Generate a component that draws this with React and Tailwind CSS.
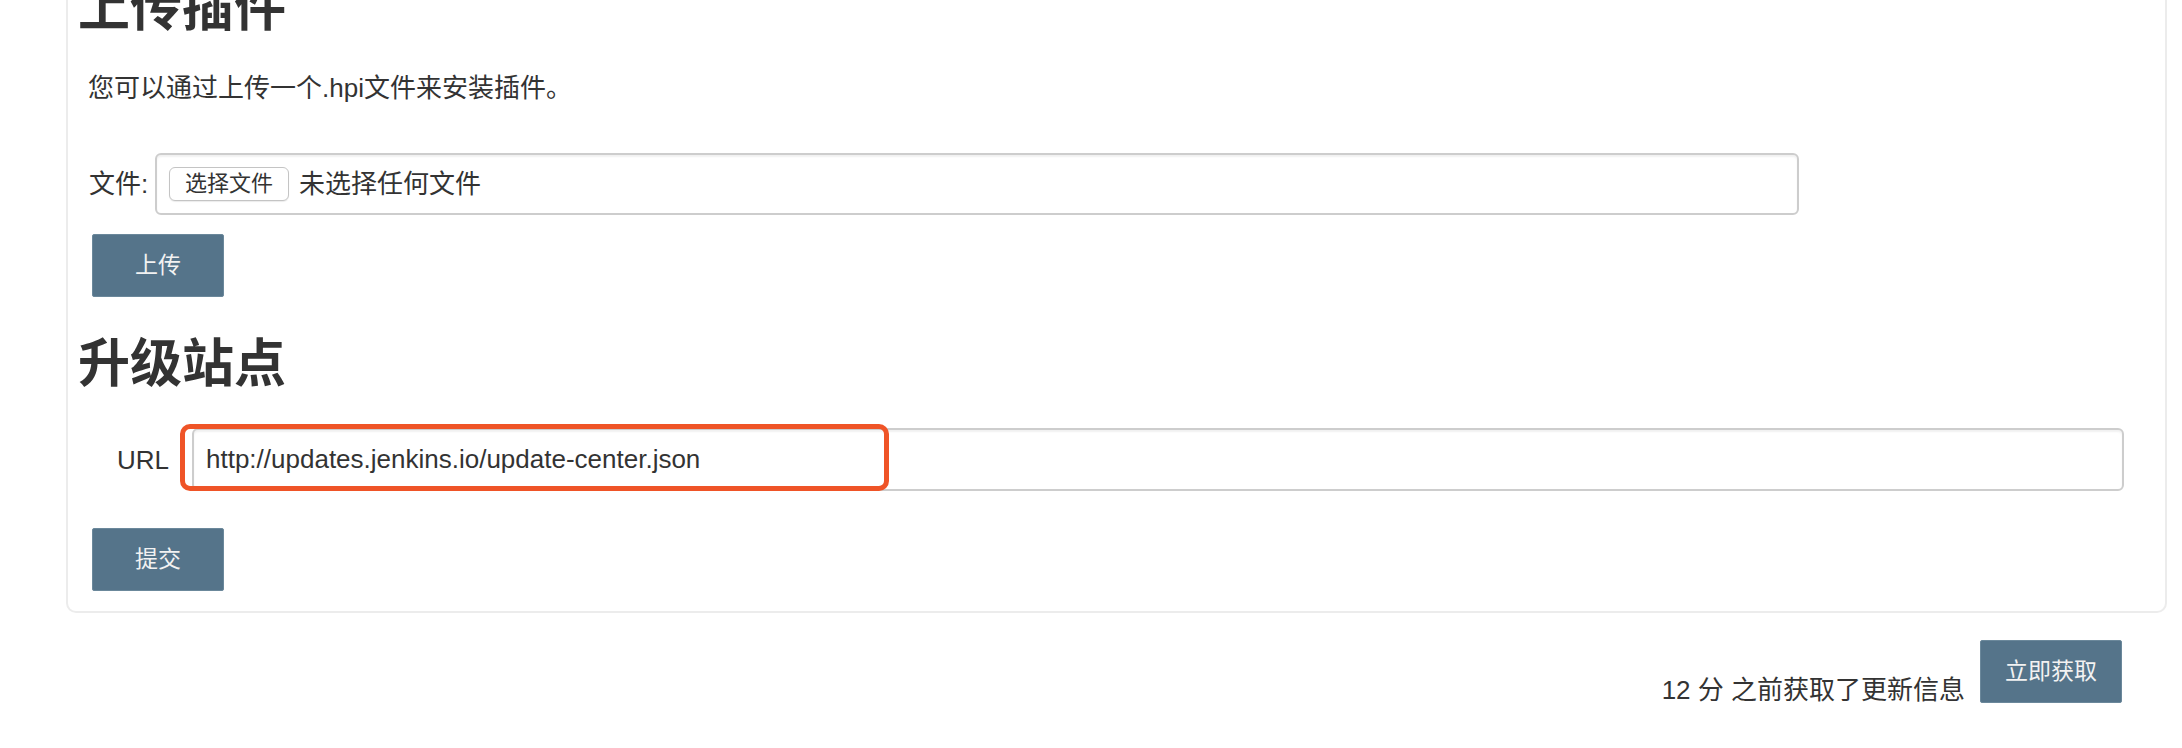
import React from 'react';

const font = "font-['Liberation_Sans','Noto_Sans_CJK_SC',sans-serif]";

const Button = ({ children, className = '' }) => (
    <button
        type="button"
        className={`h-[63px] rounded-[2px] border border-[#6b889b] bg-[#55748a] text-[23px] leading-none text-[#f2f2f2] ${className}`}
    >
        {children}
    </button>
);

const App = () => {
    return (
        <div className={`h-[748px] w-[2182px] overflow-hidden bg-white text-[#333333] ${font}`}>
            <div className="ml-[66px] mr-[15px] -mt-[18px] rounded-b-[10px] border-2 border-t-0 border-[#ececec] pb-[20px] pl-[10px]">
                {/* Upload plugin */}
                <h1 className="h-[52px] text-[52px] font-bold leading-[52px]">上传插件</h1>
                <p className="mt-[36px] pl-[10px] text-[26px] leading-[36px]">您可以通过上传一个.hpi文件来安装插件。</p>

                <div className="mt-[47px] flex items-center pl-[11px]">
                    <span className="w-[66px] text-[26px] leading-none">文件:</span>
                    <div className="flex h-[62px] w-[1644px] items-center rounded-[6px] border-2 border-[#cdcdcd] pl-[12px] shadow-[inset_0_2px_2px_rgba(0,0,0,0.06)]">
                        <span className="flex h-[34px] w-[120px] items-center justify-center rounded-[6px] border border-[#c4c4c4] bg-white text-[22px] leading-none shadow-[0_1px_1px_rgba(0,0,0,0.08)]">
                            选择文件
                        </span>
                        <span className="ml-[10px] text-[26px] leading-none">未选择任何文件</span>
                    </div>
                </div>

                <Button className="mt-[19px] ml-[14px] px-[42px]">上传</Button>

                {/* Update site */}
                <h2 className="mt-[41px] h-[52px] text-[52px] font-bold leading-[52px]">升级站点</h2>

                <div className="mt-[38px] flex items-center">
                    <span className="w-[114px] pl-[39px] text-[26px] leading-none">URL</span>
                    <div className="relative flex h-[63px] w-[1932px] items-center rounded-[6px] border-2 border-[#cdcdcd] pl-[12px] text-[26px] shadow-[inset_0_2px_2px_rgba(0,0,0,0.06)]">
                        http://updates.jenkins.io/update-center.json
                        <div className="absolute -left-[14px] -top-[6px] h-[67px] w-[709px] rounded-[10px] border-[5px] border-[#ef5427]" />
                    </div>
                </div>

                <Button className="mt-[37px] ml-[14px] px-[42px]">提交</Button>
            </div>

            <div className="mt-[27px] mr-[60px] flex items-end justify-end gap-[15px]">
                <span className="text-[26px] leading-none">12 分 之前获取了更新信息</span>
                <Button className="w-[142px]">立即获取</Button>
            </div>
        </div>
    );
};

export default App;
